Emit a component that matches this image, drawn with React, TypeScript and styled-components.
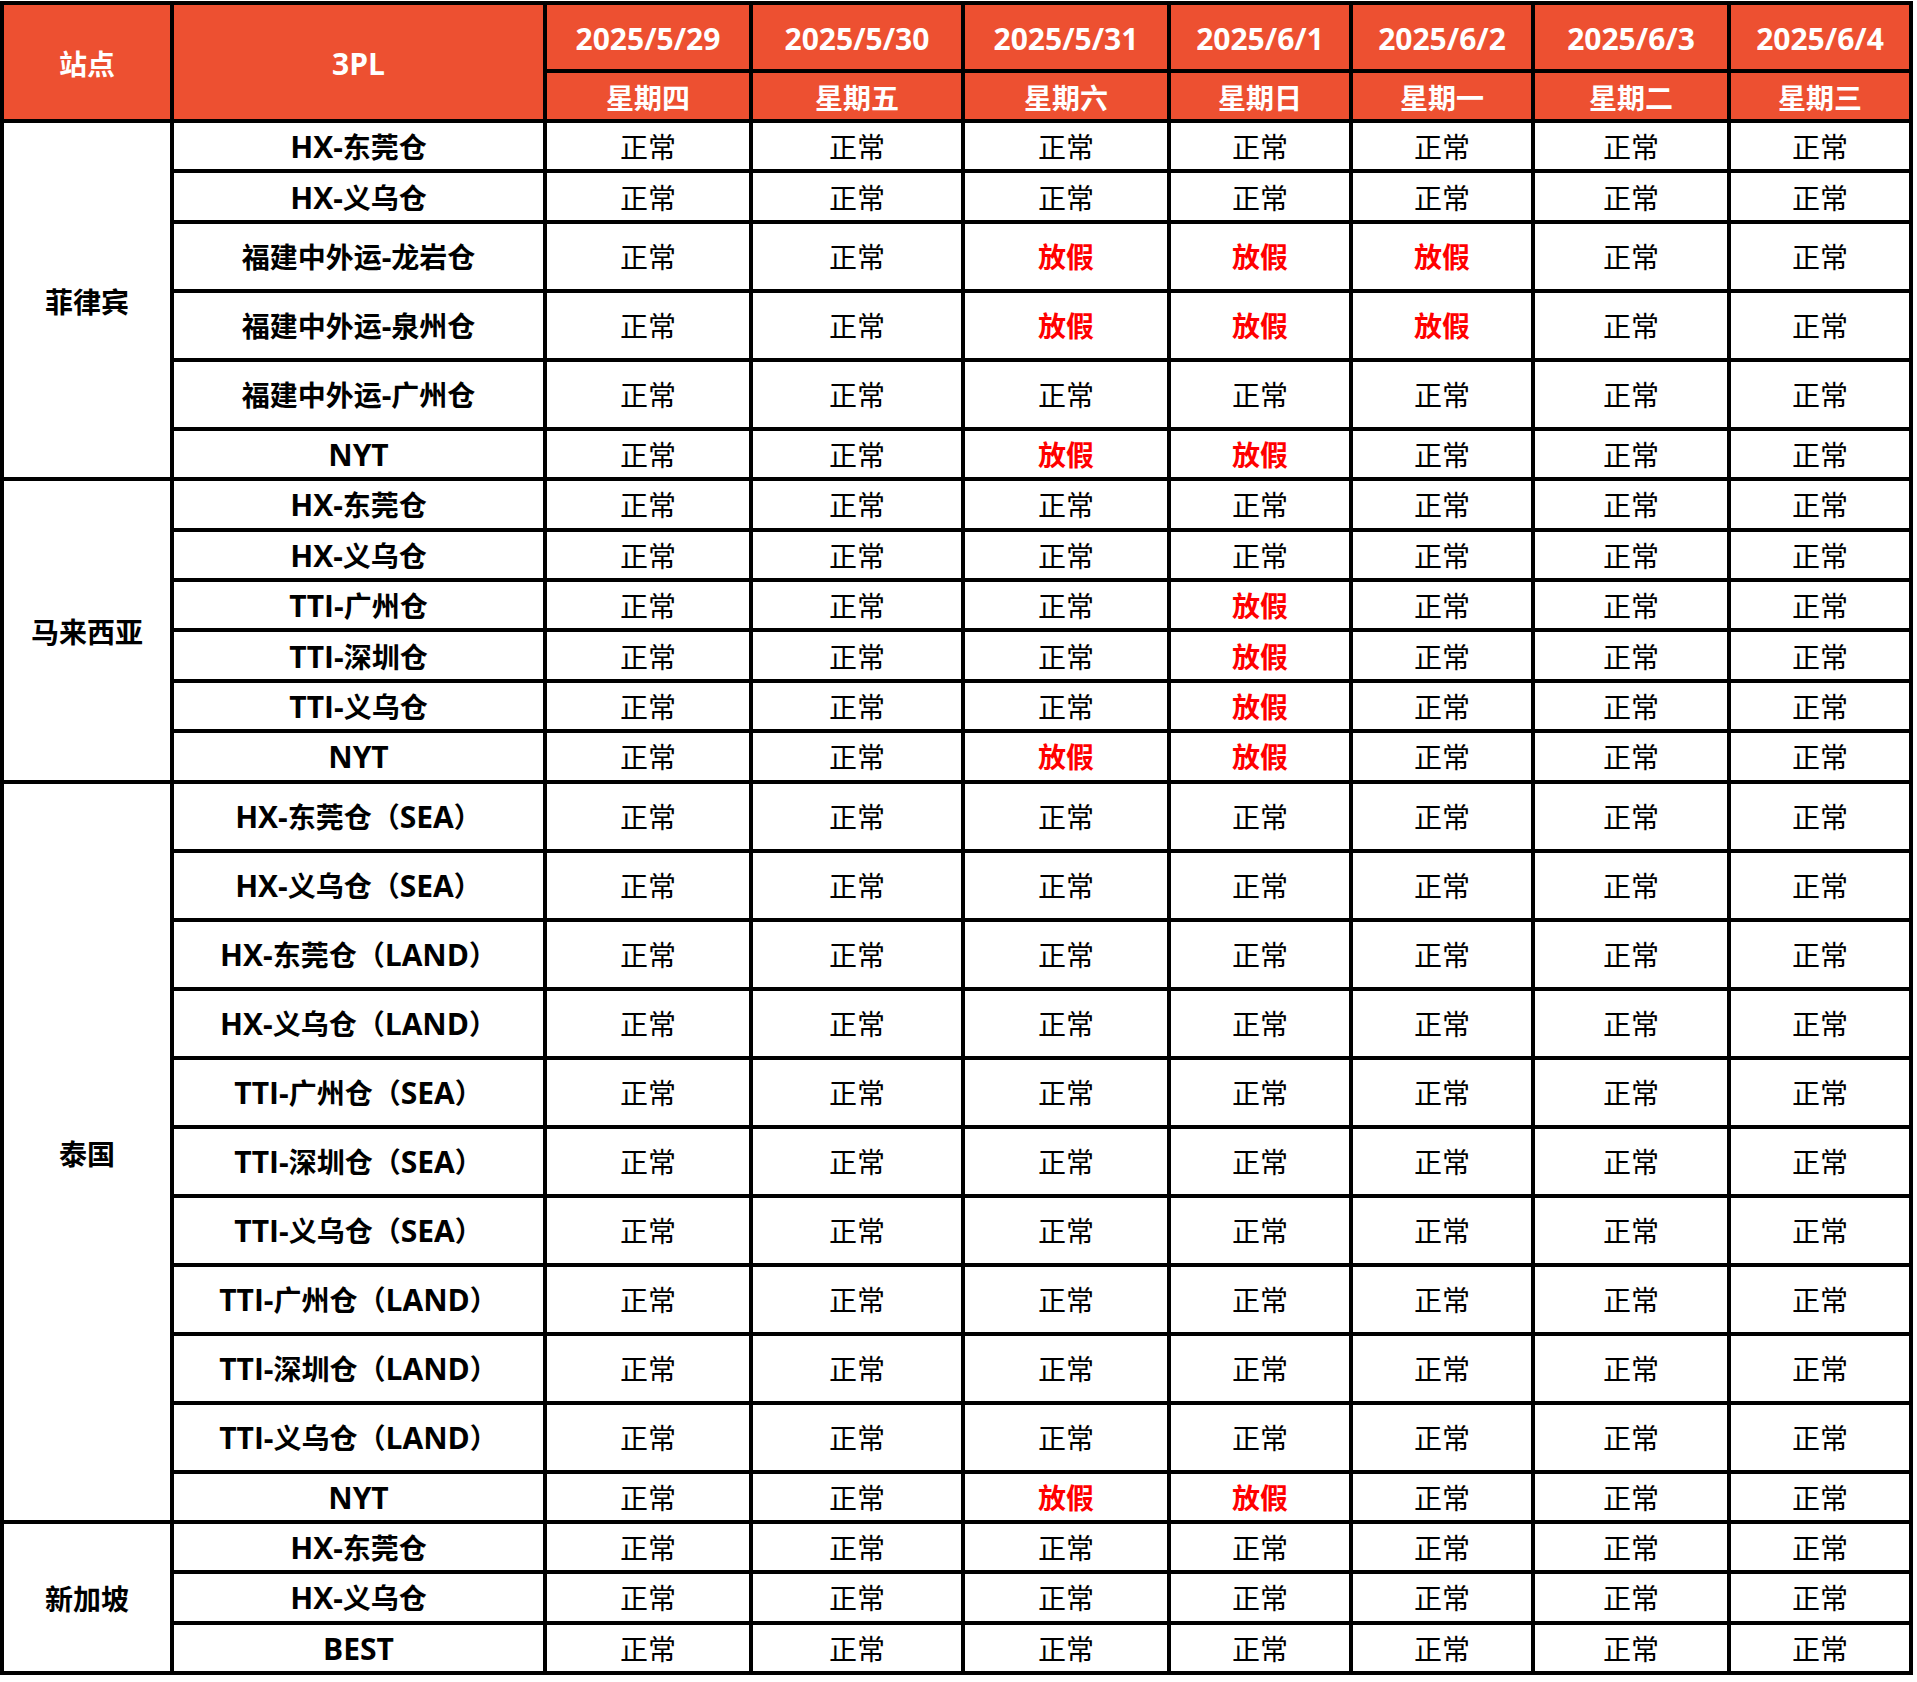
import React from "react";
import styled, { createGlobalStyle } from "styled-components";

const GlobalStyle = createGlobalStyle`
  html, body {
    margin: 0;
    padding: 0;
    background: #ffffff;
  }
  body {
    font-family: "Open Sans", "Noto Sans CJK SC", sans-serif;
  }
`;

const HEADER_BG = "#ed5031";

const Sheet = styled.div`
  display: grid;
  grid-template-columns: 166px 369px 202px 208px 202px 178px 178px 192px 178px;
  gap: 4px;
  padding: 4px;
  margin-top: 1px;
  width: max-content;
  background: #000;
`;

const HeadCell = styled.div<{ $span?: number; $h?: number }>`
  grid-row: span ${(p) => p.$span || 1};
  min-height: ${(p) => p.$h || 46}px;
  background: ${HEADER_BG};
  color: #fff;
  font-weight: 700;
  font-size: 28px;
  display: flex;
  align-items: center;
  justify-content: center;
  line-height: 1;
  padding-top: 4px;
  box-sizing: border-box;
`;

const SiteCell = styled.div<{ $span: number }>`
  grid-row: span ${(p) => p.$span};
  background: #fff;
  color: #000;
  font-weight: 700;
  font-size: 28px;
  display: flex;
  align-items: center;
  justify-content: center;
  padding-top: 2px;
`;

const NameCell = styled.div<{ $tall?: boolean }>`
  height: ${(p) => (p.$tall ? "65px" : "46.4px")};
  background: #fff;
  color: #000;
  font-weight: 700;
  font-size: 28px;
  display: flex;
  align-items: center;
  justify-content: center;
  white-space: nowrap;
  line-height: 1;
  padding-top: 2px;
  box-sizing: border-box;
`;

const StatusCell = styled.div<{ $off?: boolean }>`
  background: #fff;
  color: ${(p) => (p.$off ? "#ff0000" : "#000")};
  font-weight: ${(p) => (p.$off ? 700 : 400)};
  font-size: 28px;
  display: flex;
  align-items: center;
  justify-content: center;
  line-height: 1;
  padding-top: 2px;
`;

const Latin = styled.span`
  font-size: 30px;
`;

const days = [
  { date: "2025/5/29", week: "星期四" },
  { date: "2025/5/30", week: "星期五" },
  { date: "2025/5/31", week: "星期六" },
  { date: "2025/6/1", week: "星期日" },
  { date: "2025/6/2", week: "星期一" },
  { date: "2025/6/3", week: "星期二" },
  { date: "2025/6/4", week: "星期三" },
];

type Row = { name: string; tall?: boolean; off?: number[] };
type Group = { site: string; rows: Row[] };

const groups: Group[] = [
  {
    site: "菲律宾",
    rows: [
      { name: "HX-东莞仓" },
      { name: "HX-义乌仓" },
      { name: "福建中外运-龙岩仓", tall: true, off: [2, 3, 4] },
      { name: "福建中外运-泉州仓", tall: true, off: [2, 3, 4] },
      { name: "福建中外运-广州仓", tall: true },
      { name: "NYT", off: [2, 3] },
    ],
  },
  {
    site: "马来西亚",
    rows: [
      { name: "HX-东莞仓" },
      { name: "HX-义乌仓" },
      { name: "TTI-广州仓", off: [3] },
      { name: "TTI-深圳仓", off: [3] },
      { name: "TTI-义乌仓", off: [3] },
      { name: "NYT", off: [2, 3] },
    ],
  },
  {
    site: "泰国",
    rows: [
      { name: "HX-东莞仓（SEA）", tall: true },
      { name: "HX-义乌仓（SEA）", tall: true },
      { name: "HX-东莞仓（LAND）", tall: true },
      { name: "HX-义乌仓（LAND）", tall: true },
      { name: "TTI-广州仓（SEA）", tall: true },
      { name: "TTI-深圳仓（SEA）", tall: true },
      { name: "TTI-义乌仓（SEA）", tall: true },
      { name: "TTI-广州仓（LAND）", tall: true },
      { name: "TTI-深圳仓（LAND）", tall: true },
      { name: "TTI-义乌仓（LAND）", tall: true },
      { name: "NYT", off: [2, 3] },
    ],
  },
  {
    site: "新加坡",
    rows: [{ name: "HX-东莞仓" }, { name: "HX-义乌仓" }, { name: "BEST" }],
  },
];

// latin runs get a slightly bigger size so they sit like YaHei's
const mixed = (text: string) =>
  text.split(/([\x20-\x7e]+)/).map((part, i) =>
    /^[\x20-\x7e]+$/.test(part) ? <Latin key={i}>{part}</Latin> : part
  );

export default function App() {
  return (
    <>
      <GlobalStyle />
      <Sheet>
        <HeadCell $span={2}>站点</HeadCell>
        <HeadCell $span={2}>{mixed("3PL")}</HeadCell>
        {days.map((d) => (
          <HeadCell key={d.date} $h={64}>
            <Latin>{d.date}</Latin>
          </HeadCell>
        ))}
        {days.map((d) => (
          <HeadCell key={d.week}>{d.week}</HeadCell>
        ))}

        {groups.map((g) => (
          <React.Fragment key={g.site}>
            <SiteCell $span={g.rows.length}>{g.site}</SiteCell>
            {g.rows.map((r, ri) => (
              <React.Fragment key={ri}>
                <NameCell $tall={r.tall}>{mixed(r.name)}</NameCell>
                {days.map((d, di) => {
                  const off = (r.off || []).includes(di);
                  return (
                    <StatusCell key={d.date} $off={off}>
                      {off ? "放假" : "正常"}
                    </StatusCell>
                  );
                })}
              </React.Fragment>
            ))}
          </React.Fragment>
        ))}
      </Sheet>
    </>
  );
}
